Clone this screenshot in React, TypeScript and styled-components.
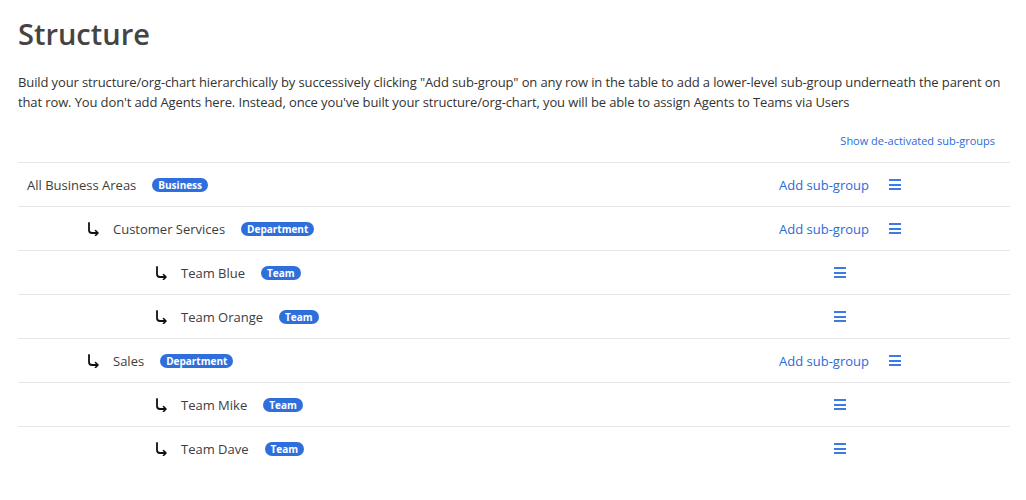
import styled, { createGlobalStyle } from "styled-components";

const GlobalStyle = createGlobalStyle`
    body {
        margin: 0;
        background: #ffffff;
        font-family: "Open Sans", "Liberation Sans", sans-serif;
        color: #444;
    }
`;

const Page = styled.div`
    padding: 14px 16px 0 18px;
`;

const Title = styled.h1`
    font-size: 29px;
    font-weight: 600;
    color: #444;
    margin: 0;
    line-height: 40px;
`;

const Intro = styled.p`
    font-size: 13px;
    letter-spacing: -0.12px;
    line-height: 20px;
    color: #333;
    margin: 18px 0 0 0;
`;

const TopLinks = styled.div`
    display: flex;
    justify-content: flex-end;
    padding: 21px 15px 0 0;
    height: 50px;
    box-sizing: border-box;
`;

const SmallLink = styled.a`
    font-size: 11px;
    color: #2a6bd9;
    cursor: pointer;
`;

const Table = styled.div`
    border-top: 1px solid #e6e6e6;
`;

const Row = styled.div<{ last?: boolean }>`
    display: grid;
    grid-template-columns: 1fr 160px 90px;
    align-items: center;
    height: 43px;
    border-bottom: ${props => props.last ? 'none' : '1px solid #e6e6e6'};
`;

const NameCell = styled.div<{ level: number }>`
    display: flex;
    align-items: center;
    padding-left: ${props => props.level === 0 ? 9 : props.level === 1 ? 69 : 137}px;
    font-size: 13px;
    color: #3d3d3d;
`;

const Arrow = styled.svg`
    width: 13px;
    height: 14px;
    margin-right: 13px;
    flex-shrink: 0;
`;

const Badge = styled.span`
    display: inline-block;
    margin-left: 16px;
    background: #2f6fdb;
    color: #fff;
    font-size: 10px;
    font-weight: 700;
    line-height: 14px;
    height: 14px;
    padding: 0 6px;
    border-radius: 7px;
`;

const Actions = styled.div`
    display: flex;
    align-items: center;
    justify-content: center;
    gap: 20px;
`;

const AddLink = styled.a`
    font-size: 13px;
    color: #2a6bd9;
    cursor: pointer;
`;

const Menu = styled.div`
    width: 12px;
    display: flex;
    flex-direction: column;
    gap: 2.5px;
    cursor: pointer;

    span {
        display: block;
        height: 2px;
        background: #3d7be0;
    }
`;

type Group = {
    name: string;
    kind: string;
    level: number;
    canAdd: boolean;
};

const groups: Group[] = [
    { name: "All Business Areas", kind: "Business", level: 0, canAdd: true },
    { name: "Customer Services", kind: "Department", level: 1, canAdd: true },
    { name: "Team Blue", kind: "Team", level: 2, canAdd: false },
    { name: "Team Orange", kind: "Team", level: 2, canAdd: false },
    { name: "Sales", kind: "Department", level: 1, canAdd: true },
    { name: "Team Mike", kind: "Team", level: 2, canAdd: false },
    { name: "Team Dave", kind: "Team", level: 2, canAdd: false },
];

function ChildArrow() {
    return (
        <Arrow viewBox="0 0 13 14" fill="none">
            <path d="M2 1 V8 Q2 11 5 11 H10" stroke="#111" strokeWidth="1.8" strokeLinecap="round" />
            <path d="M8.5 8.5 L11 11 L8.5 13.5" stroke="#111" strokeWidth="1.6" strokeLinecap="round" strokeLinejoin="round" />
        </Arrow>
    );
}

export default function App() {
    return (
        <>
            <GlobalStyle />
            <Page>
                <Title>Structure</Title>
                <Intro>
                    Build your structure/org-chart hierarchically by successively clicking "Add sub-group" on any row in the table to add a lower-level sub-group underneath the parent on that row. You don't add Agents here. Instead, once you've built your structure/org-chart, you will be able to assign Agents to Teams via Users
                </Intro>
                <TopLinks>
                    <SmallLink>Show de-activated sub-groups</SmallLink>
                </TopLinks>
                <Table>
                    {groups.map((g, i) => (
                        <Row key={g.name} last={i === groups.length - 1}>
                            <NameCell level={g.level}>
                                {g.level > 0 && <ChildArrow />}
                                {g.name}
                                <Badge>{g.kind}</Badge>
                            </NameCell>
                            <Actions>
                                {g.canAdd && <AddLink>Add sub-group</AddLink>}
                                <Menu>
                                    <span />
                                    <span />
                                    <span />
                                </Menu>
                            </Actions>
                            <div />
                        </Row>
                    ))}
                </Table>
            </Page>
        </>
    );
}
